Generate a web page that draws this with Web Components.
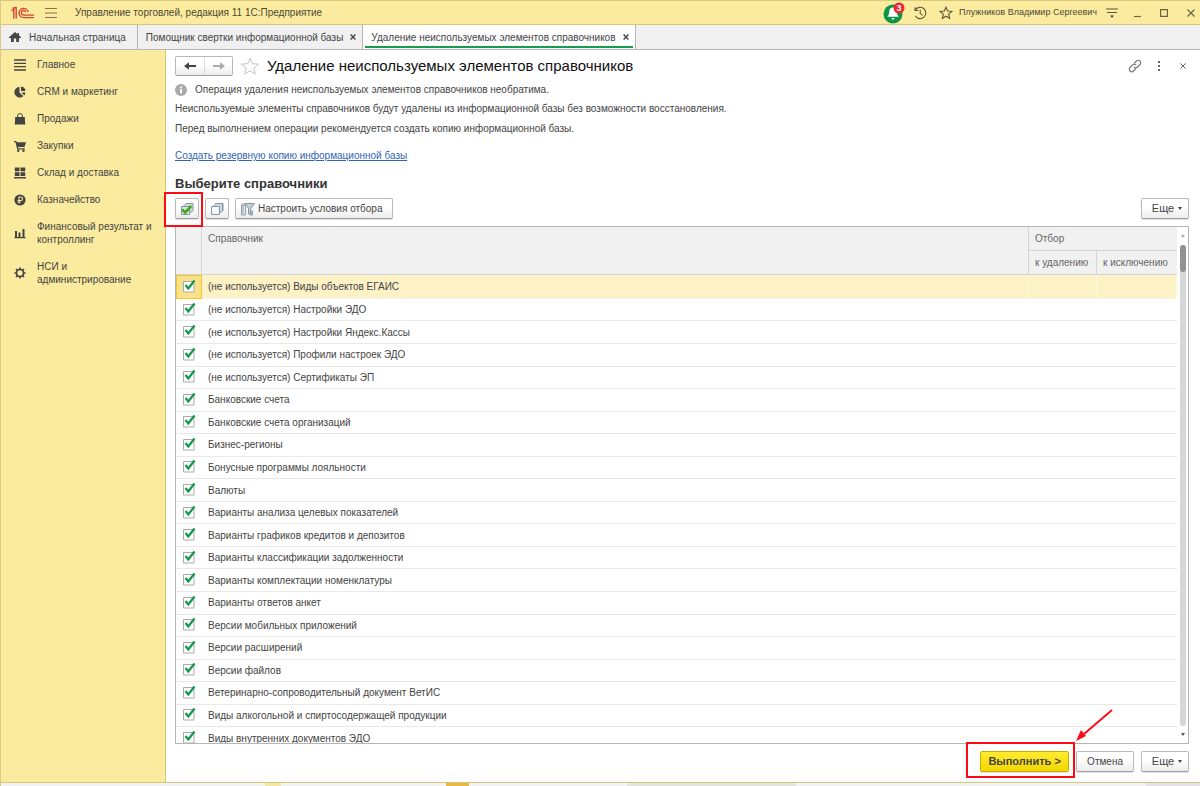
<!DOCTYPE html>
<html lang="ru">
<head>
<meta charset="utf-8">
<title>Удаление неиспользуемых элементов справочников</title>
<style>
html,body{height:100%;margin:0}
body{font:10px/13px "Liberation Sans",Arial,sans-serif;color:#444;background:#fff}
</style>
</head>
<body>
<erp-app></erp-app>
<script>
const define=(name,html,setup)=>customElements.define(name,class extends HTMLElement{
  constructor(){super();this.attachShadow({mode:'open'}).innerHTML='<style>*{box-sizing:border-box}:host{box-sizing:border-box}button{font:inherit;color:inherit}</style>'+html}
  connectedCallback(){if(setup&&!this.ready){this.ready=true;setup.call(this,this.shadowRoot)}}
});

const ICONS={
  logo:[24,12,'<g fill="none" stroke="#dc4332" stroke-width="1.400"><path d="M.6 3.800 2.800 1.800V11.500M1.600 1.200 3.200.8H5.200V11.500"/><path d="M17.200 5A4.600 4.600 0 1 0 12.600 10.600H23"/><path d="M14.800 5A2.300 2.300 0 1 0 12.600 8.100H23"/></g>'],
  burger:[12,12,'<path d="M0 1.500h12M0 6h12M0 10.500h12" stroke="#7d7650" stroke-width="1.200"/>'],
  bell:[22,22,'<circle cx="10" cy="12" r="9.500" fill="#0f9548"/><path d="M10 5.500c3 0 3.600 2.400 3.800 4.600.2 2.400.6 3.500 2 4.700H4.200c1.400-1.200 1.800-2.300 2-4.700C6.400 7.900 7 5.500 10 5.500zM8.300 16h3.400l-1.700 2.200z" fill="#fff"/><circle cx="16" cy="6" r="5.500" fill="#f0252b"/><text x="16" y="9" font-size="9" font-weight="bold" text-anchor="middle" fill="#fff">3</text>'],
  history:[14,14,'<path d="M2.100 4.200A5.700 5.700 0 1 1 2.300 10M2 1.300v3.200h3.300M7.200 3.800V7.300l2.400 2" fill="none" stroke="#5d583f" stroke-width="1.100"/>'],
  star:[14,14,'<path d="M7 1.200 8.700 5l4.200.4-3.200 2.800 1 4.100L7 10.200l-3.700 2.100 1-4.100L1.100 5.400 5.300 5z" fill="none" stroke="#5d583f" stroke-width="1.100"/>'],
  bigstar:[20,20,'<path d="M10 2 12.300 7.700l6.200.4-4.800 4 1.600 6L10 14.800l-5.300 3.300 1.600-6-4.800-4 6.200-.4z" fill="none" stroke="#bfc3c8" stroke-width="1"/>'],
  filter:[12,12,'<path d="M0 2h12M1 5.500h10" stroke="#5d583f" stroke-width="1.200"/><path d="M4 8.500h4L6 11z" fill="#444"/>'],
  min:[8,12,'<path d="M0 9.500h7" stroke="#6b6546" stroke-width="1.200"/>'],
  max:[8,8,'<path d="M.6.6h6.800v6.800H.6z" fill="none" stroke="#6b6546" stroke-width="1.200"/>'],
  close:[8,8,'<path d="m.5.5 7 7m0-7-7 7" stroke="#6b6546" stroke-width="1.200"/>'],
  tabx:[6,6,'<path d="m.6.6 4.800 4.800m0-4.800L.6 5.400" stroke="#444" stroke-width="1.400"/>'],
  winx:[6,6,'<path d="m.4.4 5.200 5.200m0-5.200L.4 5.600" stroke="#666" stroke-width="1"/>'],
  home:[12,12,'<path d="M6 1 0 6.200V7h2v4h2.800V7.500h2.400V11H10V7h2v-.8L10 4.500V2H8.500v1.200z" fill="#444"/>'],
  list:[12,12,'<path d="M0 1h12M0 4.300h12M0 7.700h12M0 11h12" stroke="#444" stroke-width="1.300"/>'],
  pie:[12,12,'<path d="M5.500.8V6.500L9.300 10.300A5.400 5.400 0 1 1 5.500.8z" fill="#444"/><path d="M7 .5A5 5 0 0 1 11.500 5H7z" fill="#444"/><path d="M7.500 6.500h4a5 5 0 0 1-1.300 2.900z" fill="#444"/>'],
  bag:[12,12,'<path d="M1.200 4h9.600l.4 7.600H.8z" fill="#444"/><path d="M3.600 5.500V3a2.400 2.400 0 0 1 4.800 0v2.500" fill="none" stroke="#444"/>'],
  cart:[12,12,'<path d="M0 1h2.400l.5 1.300H12L10.500 7H4l.3 1.200h6.500v1.300H3.200L1.500 2.200H0z" fill="#444"/><circle cx="4.200" cy="10.700" r="1.200" fill="#444"/><circle cx="9.500" cy="10.700" r="1.200" fill="#444"/>'],
  store:[12,12,'<path d="M.8.500h4.700v3.800H.8zM6.500.5h4.700v3.800H6.500zM.8 5.200h4.700V9H.8zM6.500 5.200h4.700V9H6.500zM0 10h12v1.600H0z" fill="#444"/>'],
  rub:[12,12,'<circle cx="6" cy="6" r="5.600" fill="#444"/><path d="M5 9.500V3h1.800a1.700 1.700 0 0 1 0 3.500H3.600M3.600 8h3.200" fill="none" stroke="#fbeb9e" stroke-width="1.100"/>'],
  bars:[12,12,'<path d="M1 4h2v6H1zM4.500 5.500h2V10h-2zM8.500 2h2v8h-2zM.5 10h11v1.200H.5z" fill="#444"/>'],
  gear:[12,12,'<circle cx="6" cy="6" r="3.500" fill="none" stroke="#444" stroke-width="1.700"/><path d="M6 .4v2M6 9.600v2M.4 6h2M9.600 6h2M2 2l1.400 1.400M8.600 8.600 10 10M10 2 8.600 3.400M3.400 8.600 2 10" stroke="#444" stroke-width="1.700"/>'],
  left:[12,8,'<path d="M12 4H3" stroke="#444" stroke-width="2"/><path d="M0 4 5 .3v7.400z" fill="#444"/>'],
  right:[12,8,'<path d="M0 4h9" stroke="#aaa" stroke-width="2"/><path d="M12 4 7 .3v7.400z" fill="#aaa"/>'],
  info:[12,12,'<circle cx="6" cy="6" r="6" fill="#aaa"/><path d="M6 2.500v1.800M6 5v4.500" stroke="#fff" stroke-width="1.800"/>'],
  link:[14,14,'<g fill="none" stroke="#777" stroke-width="1.100"><path d="M6 4.500 8.500 2a2.400 2.400 0 0 1 3.500 3.500L9.500 8A2.400 2.400 0 0 1 6 8"/><path d="M8 9.500 5.500 12A2.400 2.400 0 0 1 2 8.500L4.500 6A2.400 2.400 0 0 1 8 6"/></g>'],
  dots:[4,10,'<path d="M1 0h2v2H1zM1 4h2v2H1zM1 8h2v2H1z" fill="#666"/>'],
  boxes:[14,14,'<path d="M4 3.500 6 1.500h7v7l-2 2z" fill="#cfd8de" stroke="#8299a8"/><path d="M5.500 1.500h7.500M12.500 2v7" stroke="#8299a8"/><path d="M1.500 4.500h8v8h-8z" fill="#f4f6f7" stroke="#8299a8"/>'],
  boxcheck:[14,14,'<path d="M4 3.500 6 1.500h7v7l-2 2z" fill="#cfd8de" stroke="#8299a8"/><path d="M1.500 4.500h8v8h-8z" fill="#dce3e6" stroke="#8299a8"/><path d="m2.200 7.500 3 3 6-6.500" fill="none" stroke="#48a818" stroke-width="2.600"/>'],
  select:[14,14,'<path d="M.5 3h4v10h-4zM9 9h2.500v4H9z" fill="#e6ebee" stroke="#91a1ad"/><path d="M.5 2h4M2 3v9M11 9v4" stroke="#91a1ad"/><path d="M4 1.500h9.500L9.700 6.500v5.500H7.500V6.500z" fill="#c5d0d8" stroke="#8497a5"/>']
};
customElements.define('ui-icon',class extends HTMLElement{
  constructor(){super();this.attachShadow({mode:'open'})}
  connectedCallback(){const icon=ICONS[this.getAttribute('name')];if(!icon)return;const [w,h,s]=icon;
    this.shadowRoot.innerHTML=`<style>:host{display:block;flex:none}svg{display:block}</style><svg width="${w}" height="${h}" viewBox="0 0 ${w} ${h}" aria-hidden="true">${s}</svg>`}
});

define('title-bar',`<style>
:host{display:flex;align-items:center;height:25px;padding:0 0 0 10px;background:#fbeb9e;border-top:1px solid #d9ca7f;border-bottom:1px solid #d5c67a;color:#4d4935;overflow:hidden}
h1{margin:0 auto 0 8px;font:inherit}
button{border:0;background:none;padding:0;display:grid;place-items:center;flex:none;width:26px;height:22px}
button:last-of-type{width:18px;margin-left:5px}
.menu{width:32px}
.user{font-size:9px;padding-right:2px}
</style>
<ui-icon name="logo"></ui-icon><button class="menu" aria-label="Меню"><ui-icon name="burger"></ui-icon></button>
<h1>Управление торговлей, редакция 11 1С:Предприятие</h1>
<button aria-label="Оповещения"><ui-icon name="bell"></ui-icon></button><button aria-label="История"><ui-icon name="history"></ui-icon></button><button aria-label="Избранное"><ui-icon name="star"></ui-icon></button>
<span class="user">Плужников Владимир Сергеевич</span>
<button aria-label="Настройки"><ui-icon name="filter"></ui-icon></button><button aria-label="Свернуть"><ui-icon name="min"></ui-icon></button><button aria-label="Развернуть"><ui-icon name="max"></ui-icon></button><button aria-label="Закрыть"><ui-icon name="close"></ui-icon></button>`);

define('app-tab',`<style>
:host{display:flex;align-items:center;gap:7px;padding:0 6px 0 8px;border-right:1px solid #b5b5b5;position:relative}
:host([home]){gap:8px;padding-right:11px}
:host([active]){background:#fff}
:host([active])::after{content:"";position:absolute;left:2px;right:2px;bottom:1px;height:2px;background:#159c4d}
</style><slot name="icon"></slot><slot></slot><slot name="close"></slot>`);
define('tab-strip',`<style>:host{display:flex;height:25px;background:#f0f0f0;border-bottom:1px solid #b5b5b5}</style><slot></slot>`);

define('nav-item',`<style>:host{display:block}a{display:flex;align-items:center;gap:11px;padding:7px 8px 7px 13px;color:#444;text-decoration:none}</style>
<a href="#"><ui-icon></ui-icon><span><slot></slot></span></a>`,function(r){const i=r.querySelector('ui-icon'),n=document.createElement('ui-icon');n.setAttribute('name',this.getAttribute('icon'));i.replaceWith(n)});
define('side-nav',`<style>:host{display:block;width:165px;flex:none;background:#fbeb9e;border-right:1px solid #d5c67a;padding-top:1px}</style><nav><slot></slot></nav>`);

define('ui-button',`<style>
:host{display:block;position:relative}
button{display:flex;align-items:center;justify-content:center;gap:3px;height:21px;padding:0 10px;border:1px solid #b9b9b9;border-bottom-color:#9f9f9f;border-radius:2px;background:linear-gradient(#fff 40%,#ececec);box-shadow:0 1px 1px #ddd;color:#444;white-space:nowrap}
:host([icon]) button{padding:0;width:24px}
:host([tool]) button{padding:0 10px 0 5px}
:host([menu]) button{font-size:11px;padding:0 4px 0 8px;gap:4px;width:48px}
:host([menu]) button::after{content:"";border:2px solid transparent;border-top:3px solid #444;border-bottom:0}
:host([primary]) button{font-size:11px;font-weight:bold;background:linear-gradient(#ffec2e,#f2d600);border-color:#c9ad00;width:89px}
</style><button><slot></slot></button><slot name="mark"></slot>`);

define('call-out',`<style>:host{position:absolute;inset:-6px -4px -8px -11px;border:2px solid #ff0a14;pointer-events:none}
:host([wide]){inset:-9px -6px -6px -14px}
svg{display:none;position:absolute;left:107px;top:-35px;overflow:visible}:host([wide]) svg{display:block}</style>
<svg width="38" height="34"><path d="M37 1 9 25" stroke="#ff0a14" stroke-width="2"/><path d="M1 32 6 21l5 6z" fill="#ff0a14"/></svg>`);

const ROWS=['(не используется) Виды объектов ЕГАИС','(не используется) Настройки ЭДО','(не используется) Настройки Яндекс.Кассы','(не используется) Профили настроек ЭДО','(не используется) Сертификаты ЭП','Банковские счета','Банковские счета организаций','Бизнес-регионы','Бонусные программы лояльности','Валюты','Варианты анализа целевых показателей','Варианты графиков кредитов и депозитов','Варианты классификации задолженности','Варианты комплектации номенклатуры','Варианты ответов анкет','Версии мобильных приложений','Версии расширений','Версии файлов','Ветеринарно-сопроводительный документ ВетИС','Виды алкогольной и спиртосодержащей продукции','Виды внутренних документов ЭДО'];
define('catalog-table',`<style>
:host{display:flex;min-height:0;border:1px solid #b5b5b5;overflow:hidden}
.view{flex:1;min-height:0;overflow:hidden}
table{width:100%;height:calc(100% + 7px);border-collapse:separate;border-spacing:0;table-layout:fixed}
.c{width:26px}.d{width:68px}.e{width:80px}
th{font-weight:normal;text-align:left;background:#f1f1f1;color:#666;height:24px;padding:0 6px;border-right:1px solid #d5d5d5;border-bottom:1px solid #d5d5d5;white-space:nowrap}
th[rowspan]{vertical-align:top;padding-top:5px}
th.last{border-right:0}
td{padding:0 6px;border-bottom:1px solid #e8e8e8;white-space:nowrap}
td:first-child{padding:0}
.on td{background:#fdf1c6;border-right:1px solid #fff8e0;border-bottom-color:#f3f3f3}
.on td:first-child{background:#fbe28a;border:1px solid #f5c52a}
label{display:block}
input{appearance:none;display:block;width:14px;height:14px;margin:0 0 2px 6px;background:url("data:image/svg+xml,%3Csvg xmlns='http://www.w3.org/2000/svg' width='14' height='14'%3E%3Cpath d='M1.500 2.500h10.500v10.500H1.500z' fill='%23fff' stroke='%23aaa'/%3E%3Cpath d='M3.500 6 6.300 9.500 12.500 1.500' fill='none' stroke='%2310984a' stroke-width='2.200'/%3E%3C/svg%3E")}
.on input{margin-left:5px}
.bar{width:11px;display:flex;flex-direction:column;align-items:center;padding:7px 0}
.bar i{border:2px solid transparent;border-bottom:3px solid #aaa;border-top:0}
.bar i:last-child{border-bottom:0;border-top:3px solid #555}
.track{flex:1;width:6px;margin:8px 0 7px;background:#d6d6d6;border-radius:3px}
.thumb{height:27px;background:#929292;border-radius:3px}
</style>
<div class="view"><table><colgroup><col class="c"><col><col class="d"><col class="e"></colgroup>
<thead><tr><th rowspan="2"></th><th rowspan="2">Справочник</th><th colspan="2" class="last">Отбор</th></tr><tr><th>к удалению</th><th class="last">к исключению</th></tr></thead><tbody></tbody></table></div>
<div class="bar"><i></i><div class="track"><div class="thumb"></div></div><i></i></div>`,r=>{
 r.querySelector('tbody').innerHTML=ROWS.map((t,i)=>`<tr${i?'':' class="on"'}><td><input type="checkbox" id="r${i}" checked></td><td><label for="r${i}">${t}</label></td><td></td><td></td></tr>`).join('')});

define('cleanup-page',`<style>
:host{flex:1;min-width:0;display:flex;flex-direction:column;padding:6px 11px 10px 9px;background:#fff}
header,.tools,.info,footer{display:flex;align-items:center}
header{height:20px;margin-right:-6px}
.nav{display:flex;border:1px solid #b9b9b9;border-bottom-color:#9f9f9f;border-radius:2px;background:linear-gradient(#fff 40%,#ececec)}
.nav button{border:0;background:none;width:28px;height:18px;padding:0;display:grid;place-items:center}
.nav button+button{border-left:1px solid #ddd}
header>ui-icon{margin:0 7px}
h2{margin:0 auto 0 0;font:15px/20px "Liberation Sans",Arial,sans-serif;color:#111}
.act{border:0;background:none;padding:0;width:24px;height:20px;display:grid;place-items:center}
.info{gap:8px;margin-top:7px}
p{margin:0}.p{margin-top:6px}.p+.p{margin-top:7px}
a{margin-top:14px;color:#2f63b5;align-self:flex-start}
h3{margin:13px 0 6px;font-size:13px;line-height:17px;color:#333}
.tools{gap:6px}.tools ui-button[menu]{margin-left:auto}
catalog-table{flex:1;margin-top:7px}
footer{justify-content:flex-end;gap:7px;margin-top:7px}
</style>
<header><div class="nav"><button aria-label="Назад"><ui-icon name="left"></ui-icon></button><button aria-label="Вперед"><ui-icon name="right"></ui-icon></button></div>
<ui-icon name="bigstar"></ui-icon><h2>Удаление неиспользуемых элементов справочников</h2>
<button class="act" aria-label="Ссылка"><ui-icon name="link"></ui-icon></button><button class="act" aria-label="Действия"><ui-icon name="dots"></ui-icon></button><button class="act" aria-label="Закрыть"><ui-icon name="winx"></ui-icon></button></header>
<div class="info"><ui-icon name="info"></ui-icon><p>Операция удаления неиспользуемых элементов справочников необратима.</p></div>
<p class="p">Неиспользуемые элементы справочников будут удалены из информационной базы без возможности восстановления.</p>
<p class="p">Перед выполнением операции рекомендуется создать копию информационной базы.</p>
<a href="#">Создать резервную копию информационной базы</a>
<h3>Выберите справочники</h3>
<div class="tools"><ui-button icon><ui-icon name="boxcheck"></ui-icon><call-out slot="mark"></call-out></ui-button><ui-button icon><ui-icon name="boxes"></ui-icon></ui-button><ui-button tool><ui-icon name="select"></ui-icon>Настроить условия отбора</ui-button><ui-button menu>Еще</ui-button></div>
<catalog-table></catalog-table>
<footer><ui-button primary>Выполнить &gt;<call-out wide slot="mark"></call-out></ui-button><ui-button>Отмена</ui-button><ui-button menu>Еще</ui-button></footer>`);

define('erp-app',`<style>
:host{display:flex;flex-direction:column;height:100vh;border-left:1px solid #d9ca7f}
main{flex:1;min-height:0;display:flex;border-bottom:1px solid #d5c67a}
.under{height:3px;background:linear-gradient(90deg,#f3f3f3 264px,#f3e8a8 264px 280px,#f3f3f3 280px 445px,#e8b848 445px 468px,#f3f3f3 468px 626px,#e4e5dd 626px 795px,#f3f3f3 795px 1145px,#e6e2ea 1145px)}
</style>
<title-bar></title-bar>
<tab-strip><app-tab home><ui-icon slot="icon" name="home"></ui-icon>Начальная страница</app-tab><app-tab>Помощник свертки информационной базы<ui-icon slot="close" name="tabx"></ui-icon></app-tab><app-tab active>Удаление неиспользуемых элементов справочников<ui-icon slot="close" name="tabx"></ui-icon></app-tab></tab-strip>
<main><side-nav><nav-item icon="list">Главное</nav-item><nav-item icon="pie">CRM и маркетинг</nav-item><nav-item icon="bag">Продажи</nav-item><nav-item icon="cart">Закупки</nav-item><nav-item icon="store">Склад и доставка</nav-item><nav-item icon="rub">Казначейство</nav-item><nav-item icon="bars">Финансовый результат и контроллинг</nav-item><nav-item icon="gear">НСИ и администрирование</nav-item></side-nav><cleanup-page></cleanup-page></main>
<div class="under"></div>`);
</script>
</body>
</html>
